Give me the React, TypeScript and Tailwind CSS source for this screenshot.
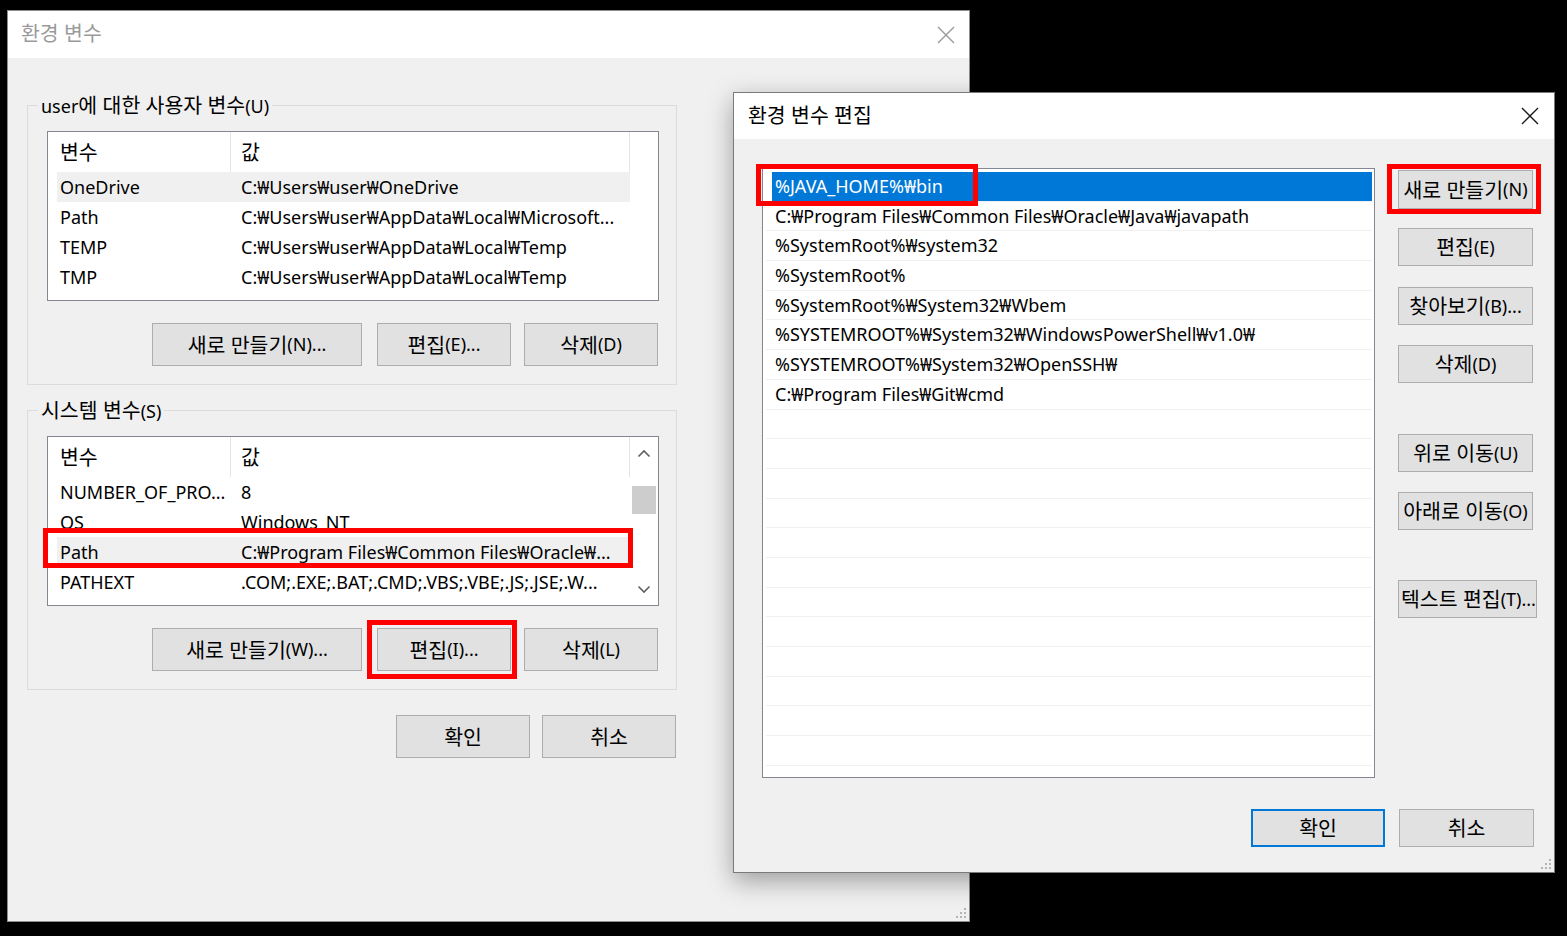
import React from "react";

const FONT = "font-['Noto_Sans','Noto_Sans_CJK_KR',sans-serif]";

function K({ t }: { t: string }) {
  const parts = t.split(/([\uAC00-\uD7A3]+(?: [\uAC00-\uD7A3]+)*)/);
  return (
    <>
      {parts.map((p, i) =>
        /[\uAC00-\uD7A3]/.test(p) ? (
          <span key={i} className="text-[20.5px] leading-[24px]">
            {p}
          </span>
        ) : (
          <React.Fragment key={i}>{p}</React.Fragment>
        )
      )}
    </>
  );
}

function CloseX({ color }: { color: string }) {
  return (
    <svg width="18" height="18" viewBox="0 0 18 18">
      <path d="M1 1 L17 17 M17 1 L1 17" stroke={color} strokeWidth="1.4" fill="none" />
    </svg>
  );
}

function Grip() {
  const dots = [
    [10, 2],
    [10, 6],
    [6, 6],
    [10, 10],
    [6, 10],
    [2, 10],
  ];
  return (
    <svg width="13" height="13" viewBox="0 0 13 13">
      {dots.map(([x, y], i) => (
        <rect key={i} x={x} y={y} width="2" height="2" fill="#b4b4b4" />
      ))}
    </svg>
  );
}

function Btn({
  w,
  h,
  children,
  primary,
  className = "",
}: {
  w: string;
  h: string;
  children: string;
  primary?: boolean;
  className?: string;
}) {
  return (
    <div
      className={`${w} ${h} ${
        primary ? "border-2 border-[#0078d7]" : "border border-[#adadad]"
      } bg-[#e1e1e1] flex items-center justify-center whitespace-nowrap text-[18px] text-black ${className}`}
    >
      <K t={children} />
    </div>
  );
}

type Row = [string, string];

function VarList({ rows, selected, scroll }: { rows: Row[]; selected: number; scroll?: boolean }) {
  return (
    <div className="ml-[9px] w-[612px] h-[170px] border border-[#828790] bg-white flex">
      <div className="w-[582px] flex flex-col">
        <div className="h-[40px] flex shrink-0">
          <div className="w-[183px] border-r border-[#e5e5e5] pl-[12px] flex items-center">
            <K t="변수" />
          </div>
          <div className="w-[399px] border-r border-[#e5e5e5] pl-[10px] flex items-center">
            <K t="값" />
          </div>
        </div>
        {rows.map((r, i) => (
          <div
            key={i}
            className={`ml-[9px] w-[573px] h-[30px] flex items-center shrink-0 ${
              i === selected ? "bg-[#f0f0f0]" : ""
            }`}
          >
            <div className="w-[184px] pl-[3px] whitespace-nowrap overflow-hidden">{r[0]}</div>
            <div className="flex-1 whitespace-nowrap overflow-hidden">{r[1]}</div>
          </div>
        ))}
      </div>
      {scroll && (
        <div className="w-[28px] flex flex-col items-center">
          <div className="h-[32px] w-full flex items-center justify-center">
            <svg width="14" height="9" viewBox="0 0 14 9">
              <path d="M1.5 7.5 L7 2 L12.5 7.5" stroke="#606060" strokeWidth="1.6" fill="none" />
            </svg>
          </div>
          <div className="mt-[17px] w-[24px] h-[28px] bg-[#cdcdcd]" />
          <div className="flex-1" />
          <div className="h-[32px] w-full flex items-center justify-center">
            <svg width="14" height="9" viewBox="0 0 14 9">
              <path d="M1.5 1.5 L7 7 L12.5 1.5" stroke="#606060" strokeWidth="1.6" fill="none" />
            </svg>
          </div>
        </div>
      )}
    </div>
  );
}

const userRows: Row[] = [
  ["OneDrive", "C:₩Users₩user₩OneDrive"],
  ["Path", "C:₩Users₩user₩AppData₩Local₩Microsoft..."],
  ["TEMP", "C:₩Users₩user₩AppData₩Local₩Temp"],
  ["TMP", "C:₩Users₩user₩AppData₩Local₩Temp"],
];

const sysRows: Row[] = [
  ["NUMBER_OF_PRO...", "8"],
  ["OS", "Windows_NT"],
  ["Path", "C:₩Program Files₩Common Files₩Oracle₩..."],
  ["PATHEXT", ".COM;.EXE;.BAT;.CMD;.VBS;.VBE;.JS;.JSE;.W..."],
];

const pathItems = [
  "%JAVA_HOME%₩bin",
  "C:₩Program Files₩Common Files₩Oracle₩Java₩javapath",
  "%SystemRoot%₩system32",
  "%SystemRoot%",
  "%SystemRoot%₩System32₩Wbem",
  "%SYSTEMROOT%₩System32₩WindowsPowerShell₩v1.0₩",
  "%SYSTEMROOT%₩System32₩OpenSSH₩",
  "C:₩Program Files₩Git₩cmd",
];

function RedBox({ cls }: { cls: string }) {
  return <div className={`absolute border-[5px] border-[#ff0000] pointer-events-none ${cls}`} />;
}

export default function App() {
  const listRows = Array.from({ length: 20 }, (_, i) => pathItems[i] ?? "");
  return (
    <div className={`relative w-[1567px] h-[936px] bg-black overflow-hidden text-[18px] text-black ${FONT}`}>
      {/* Left dialog: 환경 변수 */}
      <div className="absolute left-[7px] top-[10px] w-[963px] h-[912px] border border-[#8c8c8c] bg-[#f0f0f0] flex flex-col">
        <div className="h-[47px] bg-white flex items-center justify-between pl-[13px] pr-[14px] shrink-0">
          <span className="text-[18px] text-[#9a9a9a]">
            <K t="환경 변수" />
          </span>
          <CloseX color="#9a9a9a" />
        </div>
        <div className="flex flex-col pl-[19px] pt-[35px] w-[670px]">
          <fieldset className="border border-[#dcdcdc] px-[10px] pb-[18px] w-[650px] m-0">
            <legend className="px-[3px] leading-[24px] h-[24px]">
              <K t="user에 대한 사용자 변수(U)" />
            </legend>
            <div className="mt-[14px]">
              <VarList rows={userRows} selected={0} />
            </div>
            <div className="mt-[22px] ml-[9px] w-[612px] pr-[1px] flex justify-end">
              <Btn w="w-[210px]" h="h-[43px]">새로 만들기(N)...</Btn>
              <Btn w="w-[134px]" h="h-[43px]" className="ml-[15px]">편집(E)...</Btn>
              <Btn w="w-[134px]" h="h-[43px]" className="ml-[13px]">삭제(D)</Btn>
            </div>
          </fieldset>
          <fieldset className="mt-[13px] border border-[#dcdcdc] px-[10px] pb-[18px] w-[650px] m-0">
            <legend className="px-[3px] leading-[24px] h-[24px]">
              <K t="시스템 변수(S)" />
            </legend>
            <div className="mt-[14px]">
              <VarList rows={sysRows} selected={2} scroll />
            </div>
            <div className="mt-[22px] ml-[9px] w-[612px] pr-[1px] flex justify-end">
              <Btn w="w-[210px]" h="h-[43px]">새로 만들기(W)...</Btn>
              <Btn w="w-[134px]" h="h-[43px]" className="ml-[15px]">편집(I)...</Btn>
              <Btn w="w-[134px]" h="h-[43px]" className="ml-[13px]">삭제(L)</Btn>
            </div>
          </fieldset>
          <div className="mt-[25px] w-[650px] pr-[1px] flex justify-end">
            <Btn w="w-[134px]" h="h-[43px]">확인</Btn>
            <Btn w="w-[134px]" h="h-[43px]" className="ml-[12px]">취소</Btn>
          </div>
        </div>
        <div className="absolute right-[2px] bottom-[2px]">
          <Grip />
        </div>
      </div>

      {/* Right dialog: 환경 변수 편집 */}
      <div className="absolute left-[733px] top-[92px] w-[822px] h-[781px] border border-[#7a7a7a] bg-[#f0f0f0] flex flex-col shadow-[0_8px_24px_rgba(0,0,0,0.35)]">
        <div className="h-[46px] bg-white flex items-center justify-between pl-[14px] pr-[15px] shrink-0">
          <span className="text-[18px] text-black">
            <K t="환경 변수 편집" />
          </span>
          <CloseX color="#1a1a1a" />
        </div>
        <div className="flex flex-col pl-[28px] pt-[29px]">
          <div className="flex">
            <div className="w-[613px] h-[610px] border border-[#828790] bg-white pt-[3px] pl-[3px] pr-[2px] overflow-hidden flex flex-col">
              {listRows.map((t, i) => (
                <div key={i} className="h-[29.7px] shrink-0 border-b border-[#f0f0f0] flex">
                  {i === 0 ? (
                    <div className="ml-[6px] flex-1 bg-[#0078d7] text-white pl-[3px] flex items-center whitespace-nowrap">
                      {t}
                    </div>
                  ) : (
                    <div className="pl-[9px] flex items-center whitespace-nowrap">{t}</div>
                  )}
                </div>
              ))}
            </div>
            <div className="ml-[23px] flex flex-col">
              <Btn w="w-[135px]" h="h-[39px]" className="mt-[2px]">새로 만들기(N)</Btn>
              <Btn w="w-[135px]" h="h-[38px]" className="mt-[19px]">편집(E)</Btn>
              <Btn w="w-[135px]" h="h-[38px]" className="mt-[21px]">찾아보기(B)...</Btn>
              <Btn w="w-[135px]" h="h-[38px]" className="mt-[20px]">삭제(D)</Btn>
              <Btn w="w-[135px]" h="h-[38px]" className="mt-[51px]">위로 이동(U)</Btn>
              <Btn w="w-[135px]" h="h-[38px]" className="mt-[20px]">아래로 이동(O)</Btn>
              <Btn w="w-[139px]" h="h-[38px]" className="mt-[50px] justify-start! pl-[2px] overflow-hidden">텍스트 편집(T)...</Btn>
            </div>
          </div>
          <div className="mt-[31px] flex justify-end pr-[20px]">
            <Btn w="w-[134px]" h="h-[38px]" primary>확인</Btn>
            <Btn w="w-[135px]" h="h-[38px]" className="ml-[14px]">취소</Btn>
          </div>
        </div>
        <div className="absolute right-[2px] bottom-[2px]">
          <Grip />
        </div>
      </div>

      {/* Annotation boxes */}
      <RedBox cls="left-[43px] top-[528px] w-[590px] h-[40px]" />
      <RedBox cls="left-[367px] top-[620px] w-[150px] h-[59px]" />
      <RedBox cls="left-[756px] top-[164px] w-[222px] h-[42px]" />
      <RedBox cls="left-[1387px] top-[164px] w-[154px] h-[50px]" />
    </div>
  );
}
